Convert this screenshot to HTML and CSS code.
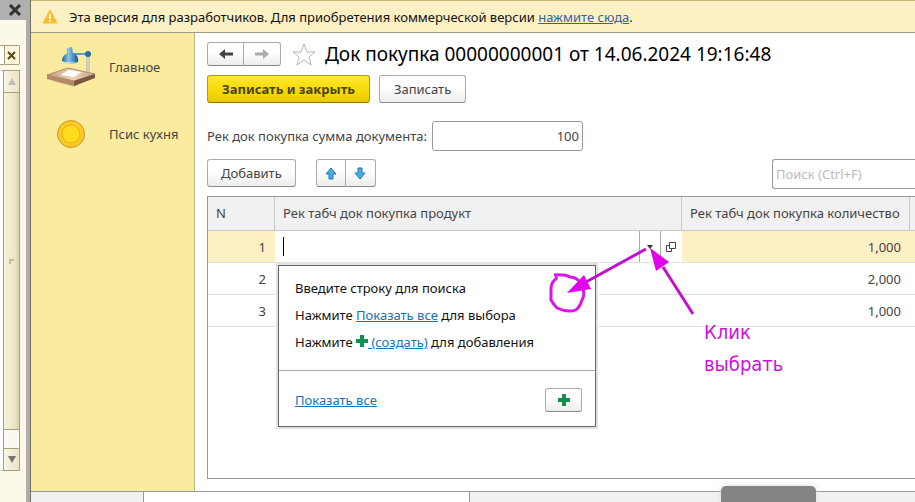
FILE: index.html
```html
<!DOCTYPE html>
<html lang="ru">
<head>
<meta charset="utf-8">
<title>Док покупка</title>
<link rel="stylesheet" href="styles.css">
</head>
<body>
<div class="desktop">
  <aside class="back-window">
    <div class="back-title">
      <button class="plain" aria-label="Закрыть окно"><svg width="14" height="12" viewBox="0 0 14 12"><path d="M2 1l10 10M12 1L2 11" stroke="#333" stroke-width="3"/></svg></button>
    </div>
    <div class="back-close">
      <button class="plain" aria-label="Закрыть панель"><svg width="9" height="9" viewBox="0 0 9 9"><path d="M1 1l7 7M8 1L1 8" stroke="#5b4a16" stroke-width="2"/></svg></button>
    </div>
    <div class="back-scroll">
      <div class="scroll-end"><svg width="8" height="7" viewBox="0 0 8 7"><path d="M4 0l4 7H0z" fill="#c3bfb0"/></svg></div>
      <div class="scroll-thumb"><svg width="5" height="5" viewBox="0 0 5 5"><path d="M1 5V1h4" fill="none" stroke="#c8bf98" stroke-width="2"/></svg></div>
      <div class="scroll-rest"></div>
      <div class="scroll-end"><svg width="8" height="7" viewBox="0 0 8 7"><path d="M0 0h8L4 7z" fill="#77736a"/></svg></div>
    </div>
  </aside>

  <div class="app">
    <header class="banner">
      <svg width="16" height="15" viewBox="0 0 16 15"><path d="M8 1l7 13H1z" fill="#fcbf2c" stroke="#fcbf2c" stroke-linejoin="round"/><path d="M8 5v5M8 11v2" stroke="#fff6d8" stroke-width="2"/></svg>
      <p>Эта версия для разработчиков. Для приобретения коммерческой версии <a href="#buy">нажмите сюда</a>.</p>
    </header>

    <div class="workspace">
      <nav class="sections">
        <a href="#main">
          <svg width="50" height="40" viewBox="0 0 50 40">
            <defs>
              <linearGradient id="blue" x1="0" x2="1"><stop offset="0" stop-color="#1765a3"/><stop offset=".4" stop-color="#8fc6e8"/><stop offset="1" stop-color="#0e5590"/></linearGradient>
              <linearGradient id="wood" x1="0" x2="1"><stop offset="0" stop-color="#c49a7c"/><stop offset=".55" stop-color="#edd3b8"/><stop offset="1" stop-color="#c8a083"/></linearGradient>
            </defs>
            <path d="M6 34l22 6 20-11-4-3z" fill="#c8b778" opacity=".6"/>
            <path d="M1 28L22 21l27 6-21 7z" fill="url(#wood)" stroke="#b28c6d"/>
            <path d="M1 28l27 6v5L1 32z" fill="#b58a6a"/>
            <path d="M28 34l21-7v4l-21 8z" fill="#79563d"/>
            <path d="M14 28l9-5 13 2-8 5z" fill="#fffef5"/>
            <path d="M42 8v17" stroke="#a9aeb5" stroke-width="3"/><path d="M42 8v17" stroke="#e9edf2"/>
            <path d="M25 7h17" stroke="#5e9cc4" stroke-width="2"/>
            <circle cx="42" cy="7" r="3" fill="#236fa9"/>
            <path d="M21 1l5-1 1 6q6 2 5 9-8 4-16-1 0-5 5-8z" fill="url(#blue)"/>
            <path d="M17 14q7 3 14 0-7 5-14 0" fill="#d8edf3"/>
          </svg>
          <span>Главное</span>
        </a>
        <a href="#kitchen">
          <svg width="50" height="30" viewBox="0 0 50 30"><circle cx="25" cy="15" r="13.500" fill="#fcc928" stroke="#c99b1e"/><circle cx="25" cy="15" r="9" fill="#ffdc1c" stroke="#e9ae18"/></svg>
          <span>Псис кухня</span>
        </a>
      </nav>

      <main class="form">
        <div class="heading">
          <div class="group">
            <button class="btn nav-btn" aria-label="Назад"><svg width="16" height="12" viewBox="0 0 16 12"><path d="M1 6l6-5v3.500h8v3H7V11z" fill="#444"/></svg></button>
            <button class="btn nav-btn" aria-label="Вперед"><svg width="16" height="12" viewBox="0 0 16 12"><path d="M15 6L9 1v3.500H1v3h8V11z" fill="#aaa"/></svg></button>
          </div>
          <button class="plain" aria-label="В избранное"><svg width="24" height="23" viewBox="0 0 24 23"><path d="M12 1l3 8h8l-6 5 2 8-7-5-7 5 2-8-6-5h8z" fill="#fff" stroke="#b5b5b5"/></svg></button>
          <h1>Док покупка 00000000001 от 14.06.2024 19:16:48</h1>
        </div>

        <div class="commands">
          <button class="btn primary">Записать и закрыть</button>
          <button class="btn">Записать</button>
        </div>

        <div class="field">
          <label for="total">Рек док покупка сумма документа:</label>
          <input id="total" type="text" value="100">
        </div>

        <div class="toolbar">
          <button class="btn add">Добавить</button>
          <div class="group">
            <button class="btn arrow" aria-label="Вверх"><svg width="12" height="13" viewBox="0 0 12 13"><path d="M6 1l5 6H8v5H4V7H1z" fill="#49aee5" stroke="#2478ae"/></svg></button>
            <button class="btn arrow" aria-label="Вниз"><svg width="12" height="13" viewBox="0 0 12 13"><path d="M6 12l5-6H8V1H4v5H1z" fill="#49aee5" stroke="#2478ae"/></svg></button>
          </div>
          <input class="search" type="search" placeholder="Поиск (Ctrl+F)" aria-label="Поиск">
        </div>

        <div class="grid">
          <table>
            <colgroup><col class="c-num"><col><col class="c-qty"><col class="c-rest"></colgroup>
            <thead><tr><th>N</th><th>Рек табч док покупка продукт</th><th>Рек табч док покупка количество</th><th></th></tr></thead>
            <tbody>
              <tr class="current">
                <td>1</td>
                <td class="editor">
                  <div class="edit-row">
                    <span class="caret"></span>
                    <input type="text" aria-label="Продукт">
                    <button class="cell-btn" aria-label="Выбрать из списка"><svg width="6" height="4" viewBox="0 0 6 4"><path d="M0 0h6L3 4z" fill="#333"/></svg></button>
                    <button class="cell-btn" aria-label="Открыть"><svg width="10" height="10" viewBox="0 0 10 10" fill="none" stroke="#444"><path d="M3.500.5h6v6h-6zM3.500 3.500h-3v6h5v-3"/></svg></button>
                  </div>
                  <div class="popup">
                    <div class="hints">
                      <p>Введите строку для поиска</p>
                      <p>Нажмите <a href="#all">Показать все</a> для выбора</p>
                      <p>Нажмите <svg width="12" height="12" viewBox="0 0 12 12"><path d="M4 0h4v4h4v4H8v4H4V8H0V4h4z" fill="#10914c"/></svg><a href="#new"> (создать)</a> для добавления</p>
                    </div>
                    <div class="popup-foot">
                      <a href="#all">Показать все</a>
                      <button class="btn create" aria-label="Создать"><svg width="12" height="12" viewBox="0 0 12 12"><path d="M4 0h4v4h4v4H8v4H4V8H0V4h4z" fill="#10914c"/></svg></button>
                    </div>
                  </div>
                  <div class="note">
                    <svg width="160" height="80" viewBox="540 240 160 80" fill="none" stroke="#c40fd0" stroke-width="3">
                      <path d="M555 274q2 3 1 5-5 3-5 10v11q3 5 6 8 6 3 13 3 6 0 8-3 3-4 4-8 3-5 1-11 0-5-4-8-4-4-9-4-5-3-16-2" stroke="#dc14e6"/>
                      <path d="M646 249l-60 33M693 314l-30-47"/>
                      <path d="M567 293l17-18 7 14zM650 248l19 14-13 9z" fill="#e300ec" stroke="none"/>
                    </svg>
                    <p>Клик<br>выбрать</p>
                  </div>
                </td>
                <td>1,000</td><td></td>
              </tr>
              <tr><td>2</td><td></td><td>2,000</td><td></td></tr>
              <tr><td>3</td><td></td><td>1,000</td><td></td></tr>
            </tbody>
          </table>
        </div>
      </main>
    </div>

    <footer class="tabs"><div class="tab"></div><div class="tab active"></div><div class="handle"></div></footer>
  </div>
</div>
</body>
</html>
```

FILE: styles.css
```css
* { box-sizing: border-box; }

body {
  margin: 0;
  font: 13px/18px "Noto Sans", "Open Sans", sans-serif;
  color: #444;
  background: #fff;
}

p, h1 { margin: 0; }
svg { flex: none; }
button, input { font: inherit; color: inherit; }
a { color: #1673b5; }

.desktop { display: flex; height: 100vh; overflow: hidden; }

.plain { display: flex; padding: 0; border: 0; background: none; }

/* Window behind the application */
.back-window {
  display: flex;
  flex-direction: column;
  flex: none;
  width: 31px;
  background: #fcf9e9;
  border-right: 1px solid #77705a;
  box-shadow: inset -4px 0 #adadb0;
}
.back-title {
  display: flex;
  justify-content: flex-end;
  align-items: center;
  height: 20px;
  padding-right: 8px;
  background: #b0b0b0;
}
.back-close {
  display: flex;
  align-items: center;
  justify-content: flex-end;
  width: 20px;
  height: 20px;
  margin-top: 25px;
  padding-right: 3px;
  border: 1px solid #aaa078;
  border-left: 0;
  border-radius: 0 2px 2px 0;
  background: linear-gradient(90deg, #fff 4px, #aaa078 4px, #aaa078 5px, #faf5dc 5px);
}
.back-scroll {
  display: flex;
  flex-direction: column;
  flex: 1;
  width: 20px;
  margin: 5px 0 31px;
  border: 1px solid #aaa078;
  border-left: 3px solid #fff;
}
.back-scroll > div {
  display: flex;
  align-items: center;
  justify-content: center;
  border-left: 1px solid #aaa078;
}
.scroll-end { height: 21px; background: linear-gradient(90deg, #f8f5e4, #eae4c8); }
.back-scroll .scroll-thumb {
  flex: 1;
  border-top: 1px solid #aaa078;
  border-bottom: 1px solid #aaa078;
  background: linear-gradient(90deg, #f8f4dd, #ece6c6 70%, #d9d2ae);
}
.scroll-rest { height: 19px; border-bottom: 1px solid #aaa078; background: #faf8f0; }

/* Application */
.app { display: flex; flex-direction: column; flex: 1; min-width: 0; }

.banner {
  display: flex;
  align-items: center;
  gap: 11px;
  height: 33px;
  padding: 0 11px;
  color: #111;
  background: #fdf0c4;
  border-top: 1px solid #c9b66f;
  border-bottom: 1px solid #a09b88;
}
.banner a { color: #3a6195; }

.workspace { display: flex; flex: 1; min-height: 0; }

.sections {
  flex: none;
  width: 164px;
  padding: 11px 15px;
  background: #fbeb9e;
  border-right: 1px solid #bdb687;
}
.sections a {
  display: flex;
  align-items: center;
  gap: 13px;
  height: 45px;
  margin-bottom: 22px;
  color: #444;
  text-decoration: none;
}

.form {
  display: flex;
  flex-direction: column;
  flex: 1;
  min-width: 0;
  padding: 8px 0 12px 12px;
}

.btn {
  display: flex;
  align-items: center;
  justify-content: center;
  height: 28px;
  padding: 0 13px;
  border: 1px solid #aaa;
  border-bottom-color: #888;
  border-radius: 3px;
  background: linear-gradient(#fff 40%, #ededed);
}
.group { display: flex; }
.group .btn:first-child { border-radius: 3px 0 0 3px; }
.group .btn:last-child { border-left: 0; border-radius: 0 3px 3px 0; }
.group .nav-btn { width: 37px; height: 24px; padding: 0; }

.heading { display: flex; align-items: center; height: 26px; }
.heading .plain { margin: 0 9px 0 11px; }
h1 { font-size: 19px; line-height: 26px; font-weight: 400; color: #000; white-space: nowrap; }

.commands { display: flex; gap: 9px; margin-top: 8px; }
.commands .btn { padding: 0 14px; }
.commands .primary {
  font-weight: 700;
  color: #4b4318;
  border-color: #b39b0b;
  border-bottom-color: #8d7900;
  background: linear-gradient(#ffe82c, #f4d600 70%, #e6c800);
}

.field { display: flex; align-items: center; gap: 5px; margin-top: 18px; }
.field input, .search {
  height: 30px;
  padding: 0 3px;
  border: 1px solid #999;
  border-radius: 3px;
  background: #fff;
}
.field input { width: 151px; text-align: right; }

.toolbar { display: flex; align-items: flex-start; margin-top: 8px; }
.add { margin-right: 20px; }
.group .arrow { width: 30px; padding: 0; }
.search {
  width: 143px;
  margin-left: auto;
  border-right: 0;
  border-radius: 3px 0 0 3px;
  appearance: none;
}
.search::placeholder { color: #bbb; }

/* Lines of the document */
.grid {
  flex: 1;
  margin-top: 7px;
  border: 1px solid #999;
  border-right: 0;
}
table { width: 100%; table-layout: fixed; border-collapse: separate; border-spacing: 0; }
.c-num { width: 67px; }
.c-qty { width: 228px; }
.c-rest { width: 5px; }
th {
  height: 34px;
  padding: 0 8px 2px;
  font-weight: 400;
  text-align: left;
  white-space: nowrap;
  background: #f1f1f1;
  border-right: 1px solid #c8c8c8;
  border-bottom: 1px solid #c8c8c8;
}
td { height: 32px; padding: 0 9px 0 8px; text-align: right; border-bottom: 1px solid #e2e2e2; }
th:last-child, td:last-child { padding: 0; border-right: 0; }
.current td { background: #fdf0c4; }
.current .editor { position: relative; padding: 0; background: #fff; }

.edit-row { display: flex; align-items: center; height: 31px; padding: 0 1px 0 8px; }
.edit-row input { flex: 1; min-width: 0; height: 24px; padding: 0; border: 0; outline: 0; background: none; }
.caret { width: 1px; height: 19px; background: #000; }
.cell-btn {
  display: flex;
  align-items: center;
  justify-content: center;
  width: 21px;
  height: 31px;
  padding: 0;
  border: 0;
  border-left: 1px solid #aaa;
  background: none;
}

.popup {
  position: absolute;
  z-index: 1;
  top: 34px;
  left: 3px;
  width: 318px;
  text-align: left;
  color: #111;
  background: #fff;
  border: 1px solid #666;
  box-shadow: 0 0 0 2px #e2e2e2;
}
.hints {
  display: flex;
  flex-direction: column;
  gap: 9px;
  padding: 13px 16px 19px;
  border-bottom: 1px solid #aaa;
}
.popup-foot {
  display: flex;
  align-items: center;
  justify-content: space-between;
  height: 55px;
  padding: 2px 13px 0 16px;
}
.create { width: 37px; height: 24px; padding: 0; }

.note { position: absolute; z-index: 2; top: 9px; right: -120px; width: 262px; text-align: left; }
.note svg { display: block; }
.note p {
  margin-top: -4px;
  padding-left: 164px;
  font: 20px/32px "DejaVu Sans Condensed", "DejaVu Sans Mono", monospace;
  color: #cf10d8;
}

/* Open windows */
.tabs { position: relative; display: flex; flex: none; height: 11px; background: #f1f1f1; border-top: 1px solid #999; }
.tab { width: 113px; border-right: 1px solid #999; }
.tab.active { width: 326px; background: #fff; }
.handle {
  position: absolute;
  right: 99px;
  bottom: 0;
  width: 95px;
  height: 16px;
  border-radius: 5px 5px 0 0;
  background: #858585;
  box-shadow: 0 0 6px #ddd;
}
```
